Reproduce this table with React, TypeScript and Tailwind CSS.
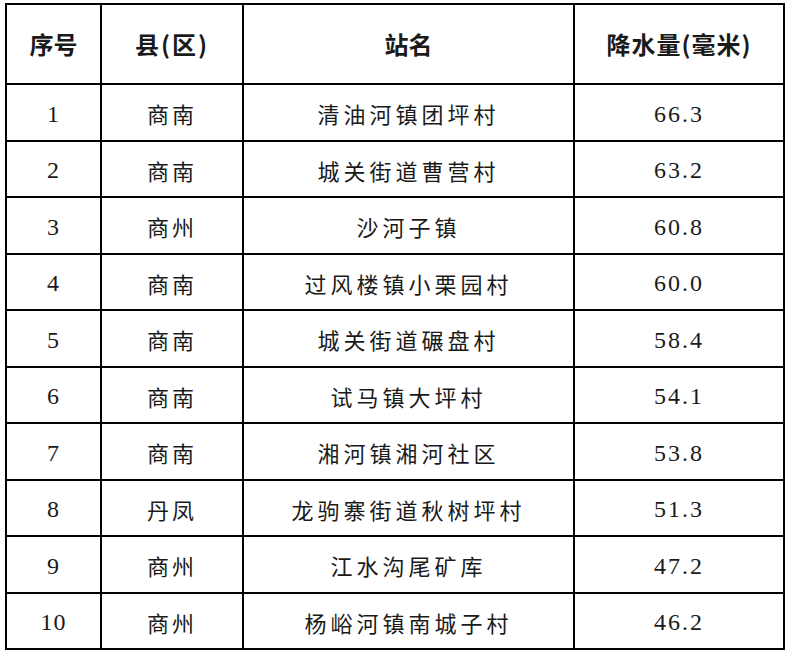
import React from "react";

interface Row {
  no: number;
  county: string;
  station: string;
  rain: string;
}

const ROWS: Row[] = [
  { no: 1, county: "商南", station: "清油河镇团坪村", rain: "66.3" },
  { no: 2, county: "商南", station: "城关街道曹营村", rain: "63.2" },
  { no: 3, county: "商州", station: "沙河子镇", rain: "60.8" },
  { no: 4, county: "商南", station: "过风楼镇小栗园村", rain: "60.0" },
  { no: 5, county: "商南", station: "城关街道碾盘村", rain: "58.4" },
  { no: 6, county: "商南", station: "试马镇大坪村", rain: "54.1" },
  { no: 7, county: "商南", station: "湘河镇湘河社区", rain: "53.8" },
  { no: 8, county: "丹凤", station: "龙驹寨街道秋树坪村", rain: "51.3" },
  { no: 9, county: "商州", station: "江水沟尾矿库", rain: "47.2" },
  { no: 10, county: "商州", station: "杨峪河镇南城子村", rain: "46.2" },
];

const cjk = "font-['Noto_Sans_CJK_SC',sans-serif]";
const serif = "font-['Liberation_Serif','Noto_Sans_CJK_SC',serif]";
const cell = "border-2 border-black text-center align-middle p-0";

const App = () => {
  return (
    <div className="w-[791px] h-[654px] bg-white pl-[5px] pt-[3px]">
      <table className="table-fixed border-collapse w-[778px] text-[#1a1a1a]">
        <colgroup>
          <col className="w-[95px]" />
          <col className="w-[142px]" />
          <col className="w-[331px]" />
          <col className="w-[210px]" />
        </colgroup>
        <thead>
          <tr className="h-[80px]">
            <th className={`${cell} ${cjk} text-[24px] font-semibold`}>序号</th>
            <th className={`${cell} ${cjk} text-[24px] font-semibold tracking-[2px]`}>
              县(区)
            </th>
            <th className={`${cell} ${cjk} text-[24px] font-semibold`}>站名</th>
            <th className={`${cell} ${cjk} text-[24px] font-semibold tracking-[1px]`}>
              降水量(毫米)
            </th>
          </tr>
        </thead>
        <tbody>
          {ROWS.map((row) => (
            <tr key={row.no} className="h-[56.5px]">
              <td className={`${cell} ${serif} text-[24px] tracking-[1px] pt-[3px]`}>
                {row.no}
              </td>
              <td className={`${cell} ${cjk} text-[22px] tracking-[3px] pt-[3px]`}>
                {row.county}
              </td>
              <td className={`${cell} ${cjk} text-[22px] tracking-[4px] pt-[3px]`}>
                {row.station}
              </td>
              <td className={`${cell} ${serif} text-[24px] tracking-[2px] pt-[3px]`}>
                {row.rain}
              </td>
            </tr>
          ))}
        </tbody>
      </table>
    </div>
  );
};

export default App;
